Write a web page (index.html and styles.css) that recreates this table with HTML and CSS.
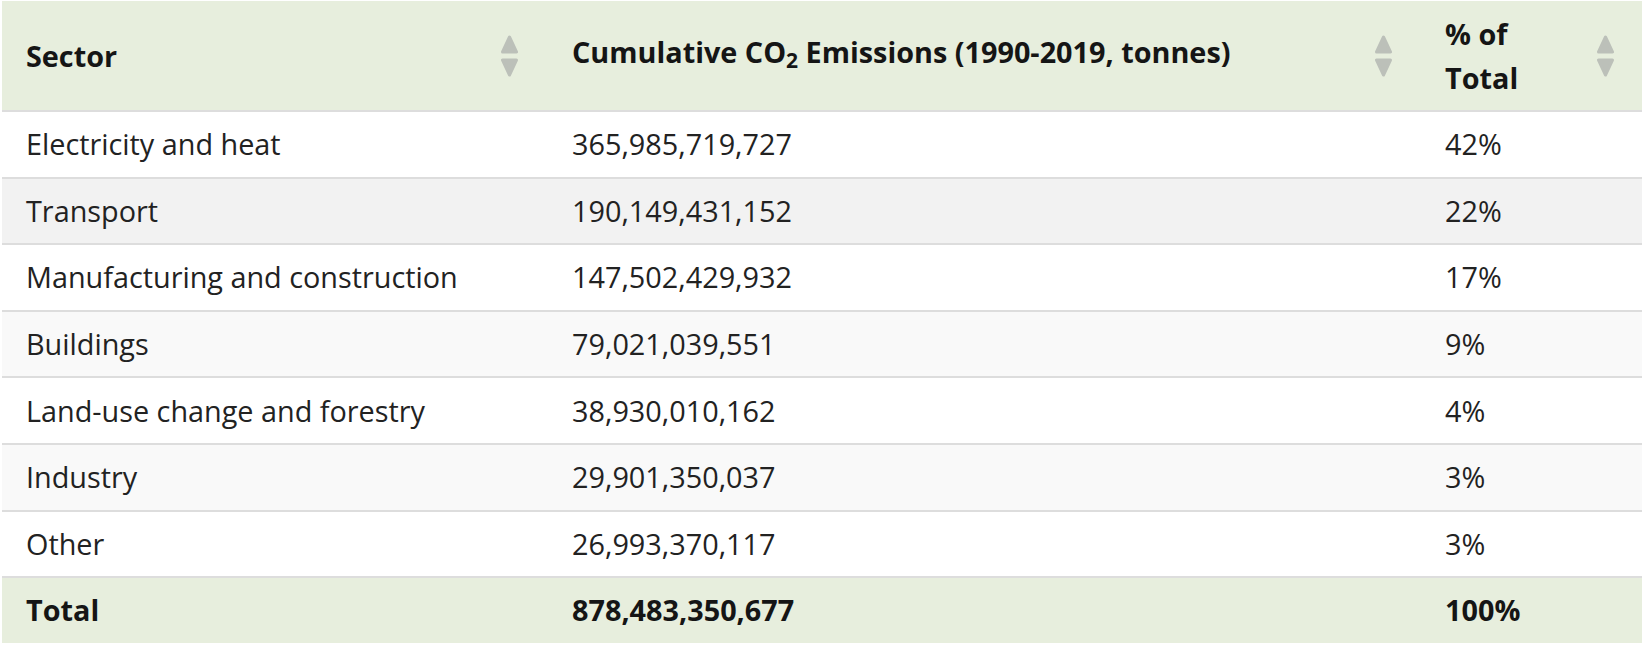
FILE: index.html
```html
<!DOCTYPE html>
<html lang="en">
<head>
<meta charset="utf-8">
<title>Cumulative CO2 Emissions by Sector</title>
<link rel="stylesheet" href="styles.css">
</head>
<body>
<table class="data-table">
  <colgroup>
    <col class="col-sector">
    <col class="col-emissions">
    <col class="col-share">
  </colgroup>
  <thead>
    <tr>
      <th><div class="th-inner"><span class="th-label">Sector</span><svg class="sort-icon" viewBox="0 0 17 42" width="17" height="42" aria-hidden="true"><path d="M8.5 2 L15.5 17 L1.5 17 Z"/><path d="M1.5 25 L15.5 25 L8.5 40 Z"/></svg></div></th>
      <th><div class="th-inner"><span class="th-label">Cumulative CO<sub>2</sub> Emissions (1990-2019, tonnes)</span><svg class="sort-icon" viewBox="0 0 17 42" width="17" height="42" aria-hidden="true"><path d="M8.5 2 L15.5 17 L1.5 17 Z"/><path d="M1.5 25 L15.5 25 L8.5 40 Z"/></svg></div></th>
      <th><div class="th-inner"><span class="th-label">% of Total</span><svg class="sort-icon" viewBox="0 0 17 42" width="17" height="42" aria-hidden="true"><path d="M8.5 2 L15.5 17 L1.5 17 Z"/><path d="M1.5 25 L15.5 25 L8.5 40 Z"/></svg></div></th>
    </tr>
  </thead>
  <tbody>
    <tr class="row-odd"><td>Electricity and heat</td><td>365,985,719,727</td><td>42%</td></tr>
    <tr class="row-hover"><td>Transport</td><td>190,149,431,152</td><td>22%</td></tr>
    <tr class="row-odd"><td>Manufacturing and construction</td><td>147,502,429,932</td><td>17%</td></tr>
    <tr class="row-even"><td>Buildings</td><td>79,021,039,551</td><td>9%</td></tr>
    <tr class="row-odd"><td>Land-use change and forestry</td><td>38,930,010,162</td><td>4%</td></tr>
    <tr class="row-even"><td>Industry</td><td>29,901,350,037</td><td>3%</td></tr>
    <tr class="row-odd"><td>Other</td><td>26,993,370,117</td><td>3%</td></tr>
  </tbody>
  <tfoot>
    <tr class="row-total"><td>Total</td><td>878,483,350,677</td><td>100%</td></tr>
  </tfoot>
</table>
</body>
</html>
```

FILE: styles.css
```css
html, body {
  margin: 0;
  padding: 0;
  background: #ffffff;
}

body {
  font-family: "Open Sans", "Liberation Sans", sans-serif;
  color: #222222;
  padding: 1px 4px 3px 2px;
}

.data-table {
  width: 1640px;
  table-layout: fixed;
  border-collapse: collapse;
  border-spacing: 0;
  font-size: 28.8px;
  line-height: 44px;
}

.col-sector { width: 546px; }
.col-emissions { width: 873px; }
.col-share { width: 221px; }

.data-table th {
  background: #e7eedd;
  color: #151515;
  font-weight: 700;
  text-align: left;
  vertical-align: middle;
  padding: 10.5px 29px 10.5px 24px;
}

.data-table th:first-child {
  padding-right: 30px;
}

.data-table th:last-child {
  padding-right: 28px;
}

.th-inner {
  display: flex;
  align-items: center;
  justify-content: space-between;
  gap: 20px;
}

.th-label {
  flex: 1 1 auto;
  min-width: 0;
}

.th-label sub {
  font-size: 21px;
  vertical-align: -5px;
}

.sort-icon {
  flex: none;
  display: block;
}

.sort-icon path {
  fill: #bcc0b9;
  stroke: #bcc0b9;
  stroke-width: 3;
  stroke-linejoin: round;
}

.data-table td {
  padding: 10.3px 24px;
  border-top: 2px solid #dddddd;
  white-space: nowrap;
}

.row-odd td { background: #ffffff; }
.row-even td { background: #f9f9f9; }
.row-hover td { background: #f2f2f2; }

.row-total td {
  background: #e7eedd;
  color: #151515;
  font-weight: 700;
}
```
